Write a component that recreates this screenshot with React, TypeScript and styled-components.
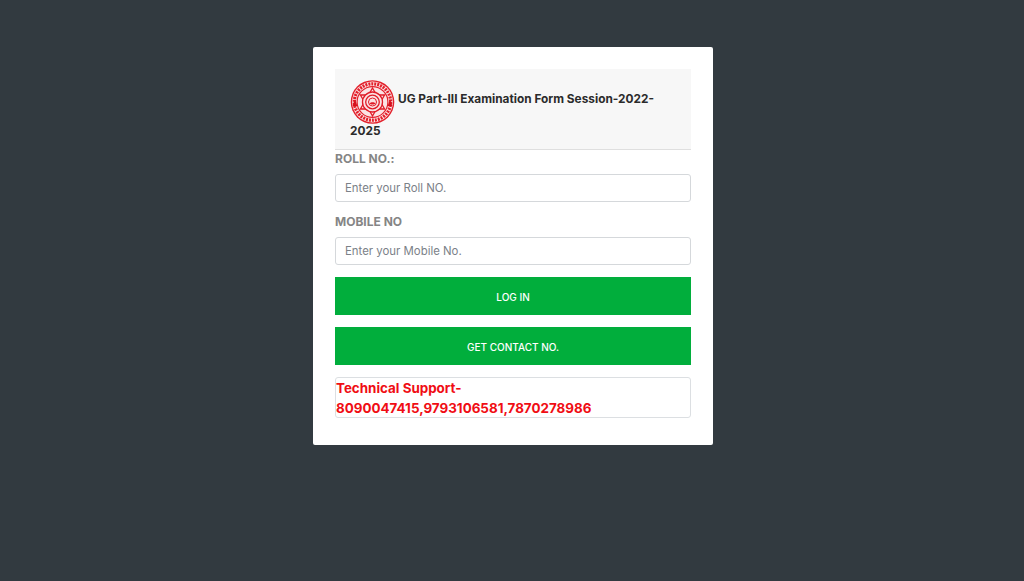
import styled, { createGlobalStyle } from "styled-components";

const GlobalStyle = createGlobalStyle`
  html, body {
    margin: 0;
    background: #323a40;
  }
  * {
    box-sizing: border-box;
  }
`;

const Page = styled.div`
  display: flex;
  justify-content: center;
  align-items: flex-start;
  height: 581px;
  padding: 47px 0 0 2px;
  background: #323a40;
  font-family: Inter, "Liberation Sans", sans-serif;
`;

const Card = styled.form`
  display: flex;
  flex-direction: column;
  width: 400px;
  height: 398px;
  padding: 22px;
  background: #ffffff;
  border-radius: 2px;
`;

const Header = styled.div`
  height: 81px;
  margin-bottom: 1px;
  padding: 11px 15px 0;
  background: #f7f7f7;
  border-bottom: 1px solid #dfdfdf;
  color: #2b2b2b;
  font-size: 11.85px;
  font-weight: 700;
  line-height: 15px;
`;

const Logo = styled.svg`
  width: 45px;
  height: 44px;
  margin-right: 3px;
  vertical-align: -21px;
`;

const Label = styled.label`
  display: block;
  height: 18px;
  margin-bottom: 5px;
  color: #858585;
  font-size: 12px;
  font-weight: 700;
  line-height: 16px;
`;

const Field = styled.div`
  display: flex;
  flex-direction: column;
  margin-bottom: 12px;
`;

const Input = styled.input`
  width: 100%;
  height: 28px;
  padding: 0 9px;
  background: #ffffff;
  border: 1px solid #d5d8db;
  border-radius: 3px;
  font-family: inherit;
  font-size: 11.4px;
  outline: none;
  &::placeholder {
    color: #7b8188;
    opacity: 1;
  }
`;

const SubmitButton = styled.button`
  width: 100%;
  height: 38px;
  margin-bottom: 12px;
  padding-top: 2px;
  background: #01ae3c;
  border: none;
  color: #ffffff;
  font-family: inherit;
  font-size: 10px;
  font-weight: 500;
`;

const Support = styled.div`
  height: 41px;
  background: #ffffff;
  border: 1px solid #dcdfe2;
  border-radius: 3px;
  color: #f00d14;
  font-size: 13.4px;
  font-weight: 700;
  line-height: 20px;
`;

const SealLogo = () => (
  <Logo viewBox="0 0 45 44">
    <circle cx="22.5" cy="22" r="21.8" fill="#e3202b" />
    <circle cx="22.5" cy="22" r="20.4" fill="#fbe9ea" />
    <circle cx="22.5" cy="22" r="18.2" fill="none" stroke="#e3202b" strokeWidth="3.2" strokeDasharray="2 1" />
    <circle cx="22.5" cy="22" r="15.4" fill="#fbe3e4" stroke="#e3202b" strokeWidth="1.2" />
    <polygon points="22.5,8 34.6,29 10.4,29" fill="none" stroke="#e01b27" strokeWidth="1.3" />
    <polygon points="22.5,36 10.4,15 34.6,15" fill="none" stroke="#e01b27" strokeWidth="1.3" />
    <circle cx="22.5" cy="22" r="10" fill="#fbe3e4" stroke="#e01b27" strokeWidth="1.3" />
    <circle cx="22.5" cy="22" r="6.8" fill="none" stroke="#e01b27" strokeWidth="1.3" />
    <circle cx="22.5" cy="22" r="4" fill="none" stroke="#e01b27" strokeWidth="1" />
    <path d="M19.6 23.6c1-1.9 5-1.9 5.8 0-1.1 1.3-4.7 1.3-5.8 0z" fill="#e01b27" />
    <polygon points="2.6,26 7.4,26 5,19" fill="#d5101c" />
    <polygon points="37.6,26 42.4,26 40,19" fill="#d5101c" />
  </Logo>
);

export default function App() {
  return (
    <>
      <GlobalStyle />
      <Page>
        <Card onSubmit={(e) => e.preventDefault()}>
          <Header>
            <SealLogo />
            UG Part-III Examination Form Session-2022-2025
          </Header>
          <Field>
            <Label htmlFor="roll">ROLL NO.:</Label>
            <Input id="roll" placeholder="Enter your Roll NO." />
          </Field>
          <Field>
            <Label htmlFor="mobile">MOBILE NO</Label>
            <Input id="mobile" placeholder="Enter your Mobile No." />
          </Field>
          <SubmitButton>LOG IN</SubmitButton>
          <SubmitButton>GET CONTACT NO.</SubmitButton>
          <Support>Technical Support- 8090047415,9793106581,7870278986</Support>
        </Card>
      </Page>
    </>
  );
}
